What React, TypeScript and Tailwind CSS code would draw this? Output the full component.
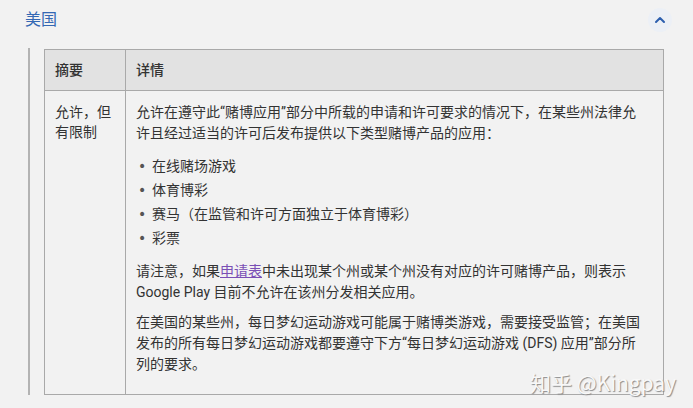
import { ChevronUp } from "lucide-react";

const games = ["在线赌场游戏", "体育博彩", "赛马（在监管和许可方面独立于体育博彩）", "彩票"];

export default function App() {
  return (
    <div className="relative w-[693px] h-[408px] overflow-hidden bg-[#f2f2f2] text-[#333] font-['Roboto','Noto_Sans_CJK_SC',sans-serif]">
      {/* section header */}
      <div className="flex items-center justify-between h-[40px] pl-[25px] pr-[21px]">
        <span className="text-[16px] text-[#3468b4]">美国</span>
        <div className="w-[24px] h-[24px] rounded-full bg-[#ecf0f6] flex items-center justify-center">
          <ChevronUp className="w-[16px] h-[16px] text-[#2d5fae]" strokeWidth={3} />
        </div>
      </div>

      <div className="flex pl-[28px] mt-[8px]">
        <div className="w-[2px] bg-[#b3b3b3] h-[347px]" />
        <table className="ml-[14px] w-[620px] border-collapse border border-[#a9a9a9] text-[14px] self-start mt-[1px]">
          <thead>
            <tr className="bg-[#e2e2e2] h-[41px]">
              <th className="w-[81px] border border-[#a9a9a9] text-left font-medium pl-[10px]">摘要</th>
              <th className="border border-[#a9a9a9] text-left font-medium pl-[10px]">详情</th>
            </tr>
          </thead>
          <tbody>
            <tr className="align-top">
              <td className="border border-[#a9a9a9] pl-[10px] pr-[6px] pt-[11px] leading-[20px]">允许，但有限制</td>
              <td className="border border-[#a9a9a9] pl-[10px] pr-[14px] pt-[11px] pb-[9px] leading-[21px]">
                <p className="mb-[10px]">
                  允许在遵守此“赌博应用”部分中所载的申请和许可要求的情况下，在某些州法律允许且经过适当的许可后发布提供以下类型赌博产品的应用：
                </p>
                <ul className="mb-[11px]">
                  {games.map((g) => (
                    <li key={g} className="flex items-center h-[24px]">
                      <span className="w-[16px] pl-[2px] text-[14px] text-[#555] font-['DejaVu_Sans',sans-serif]">•</span>
                      <span>{g}</span>
                    </li>
                  ))}
                </ul>
                <p className="mb-[9px]">
                  请注意，如果<span className="text-[#7a4fb5] underline">申请表</span>
                  中未出现某个州或某个州没有对应的许可赌博产品，则表示 Google Play 目前不允许在该州分发相关应用。
                </p>
                <p className="mb-[10px]">
                  在美国的某些州，每日梦幻运动游戏可能属于赌博类游戏，需要接受监管；在美国发布的所有每日梦幻运动游戏都要遵守下方“每日梦幻运动游戏 (DFS) 应用”部分所列的要求。
                </p>
              </td>
            </tr>
          </tbody>
        </table>
      </div>

      {/* watermark */}
      <div className="absolute left-[530px] top-[367px] text-[21px] text-[#f8f8f8] [text-shadow:1px_1px_1px_#8a8a8a] font-['Noto_Sans_CJK_SC',sans-serif]">
        知乎 @Kingpay
      </div>
    </div>
  );
}
